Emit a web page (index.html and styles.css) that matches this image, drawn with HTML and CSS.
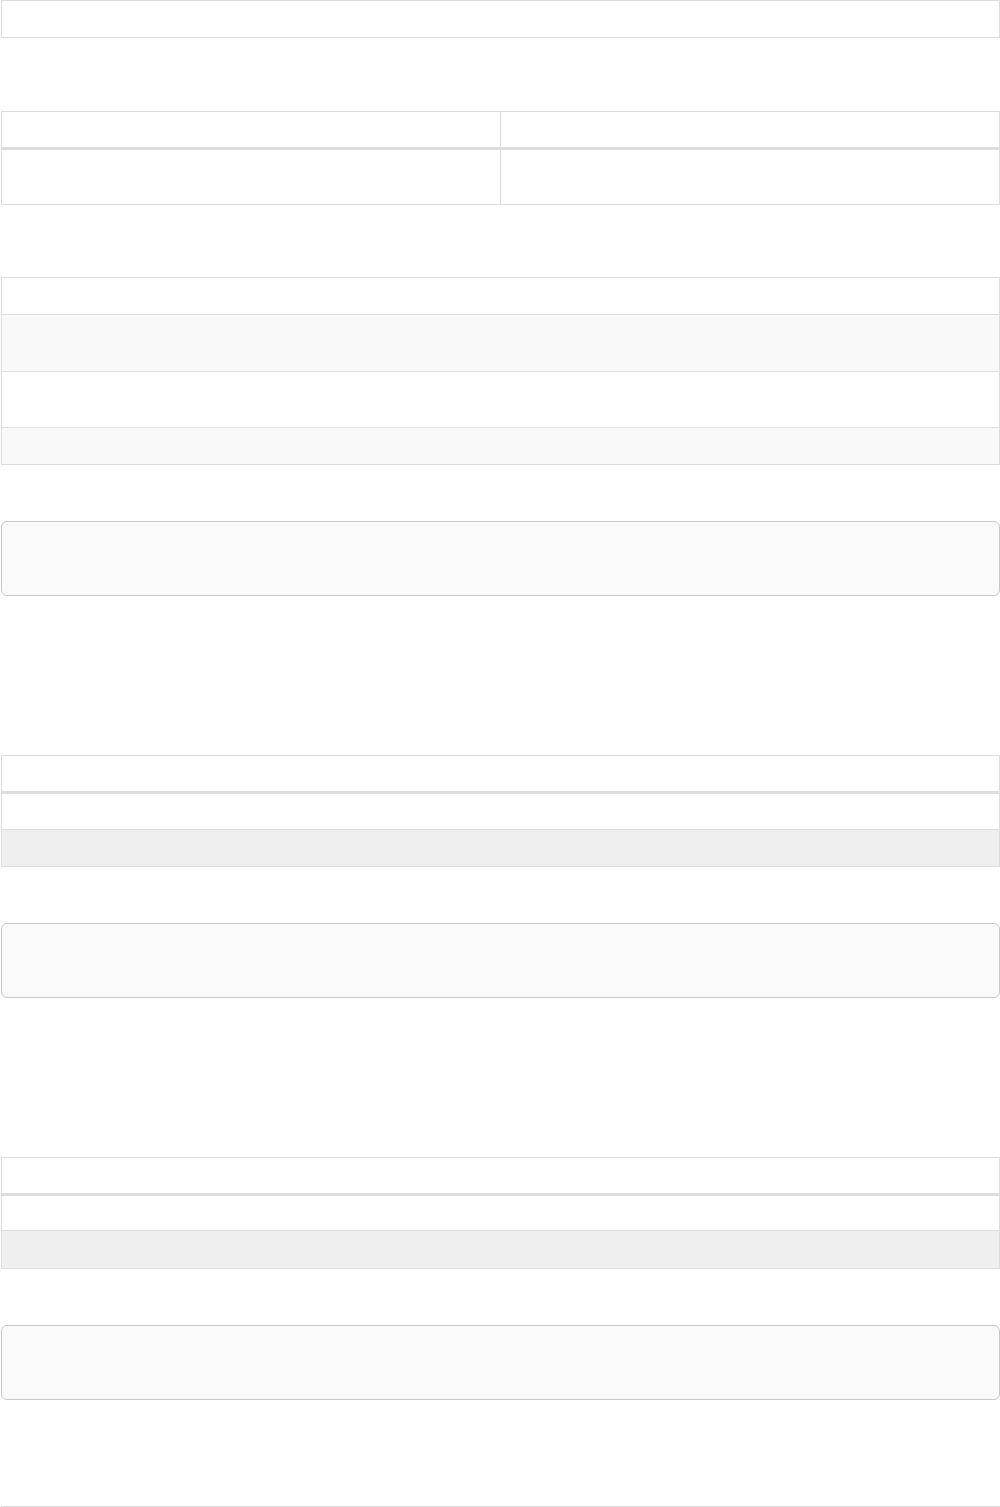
FILE: index.html
```html
<!DOCTYPE html>
<html lang="en">
<head>
<meta charset="utf-8">
<title>Tables</title>
<link rel="stylesheet" href="styles.css">
</head>
<body>
<main class="page">
  <div class="box"></div>

  <div class="tbl t2">
    <div class="row head split"><div class="cell first"></div><div class="cell"></div></div>
    <div class="row r54 split"><div class="cell first"></div><div class="cell"></div></div>
  </div>

  <div class="tbl t3">
    <div class="row r36"></div>
    <div class="row r56 line striped"></div>
    <div class="row r55 line"></div>
    <div class="row r36 line striped"></div>
  </div>

  <div class="pre p1"></div>

  <div class="tbl t5">
    <div class="row head"></div>
    <div class="row r35"></div>
    <div class="row r36 line hover"></div>
  </div>

  <div class="pre p2"></div>

  <div class="tbl t5">
    <div class="row head"></div>
    <div class="row r34"></div>
    <div class="row r37 line hover"></div>
  </div>

  <div class="pre p2"></div>

  <div class="rule"></div>
</main>
</body>
</html>
```

FILE: styles.css
```css
html, body {
  margin: 0;
  padding: 0;
  background: #fff;
  font-family: "Liberation Sans", Arial, sans-serif;
}
.page {
  width: 999px;
  margin-left: 1px;
  display: flex;
  flex-direction: column;
}
.box {
  height: 36px;
  border: 1px solid #ddd;
}
.tbl {
  border: 1px solid #ddd;
  display: flex;
  flex-direction: column;
}
.t2 { margin-top: 73px; }
.t3 { margin-top: 72px; }
.t5 { margin-top: 159px; }
.row { display: flex; }
.row.head {
  height: 35px;
  border-bottom: 3px solid #ddd;
}
.row.line { border-top: 1px solid #ddd; }
.r34 { height: 34px; }
.r35 { height: 35px; }
.r36 { height: 36px; }
.r37 { height: 37px; }
.r54 { height: 54px; }
.r55 { height: 55px; }
.r56 { height: 56px; }
.striped { background: #f9f9f9; }
.hover { background: #efefef; }
.split .cell { flex: 1 1 0; }
.split .cell.first {
  flex: 0 0 498px;
  border-right: 1px solid #ddd;
}
.pre {
  height: 73px;
  border: 1px solid #c8c8c8;
  border-radius: 6px;
  background: #fafafa;
}
.p1 { margin-top: 56px; }
.p2 { margin-top: 56px; }
.rule {
  margin-top: 106px;
  border-top: 1px solid #ddd;
  height: 0;
}
```
